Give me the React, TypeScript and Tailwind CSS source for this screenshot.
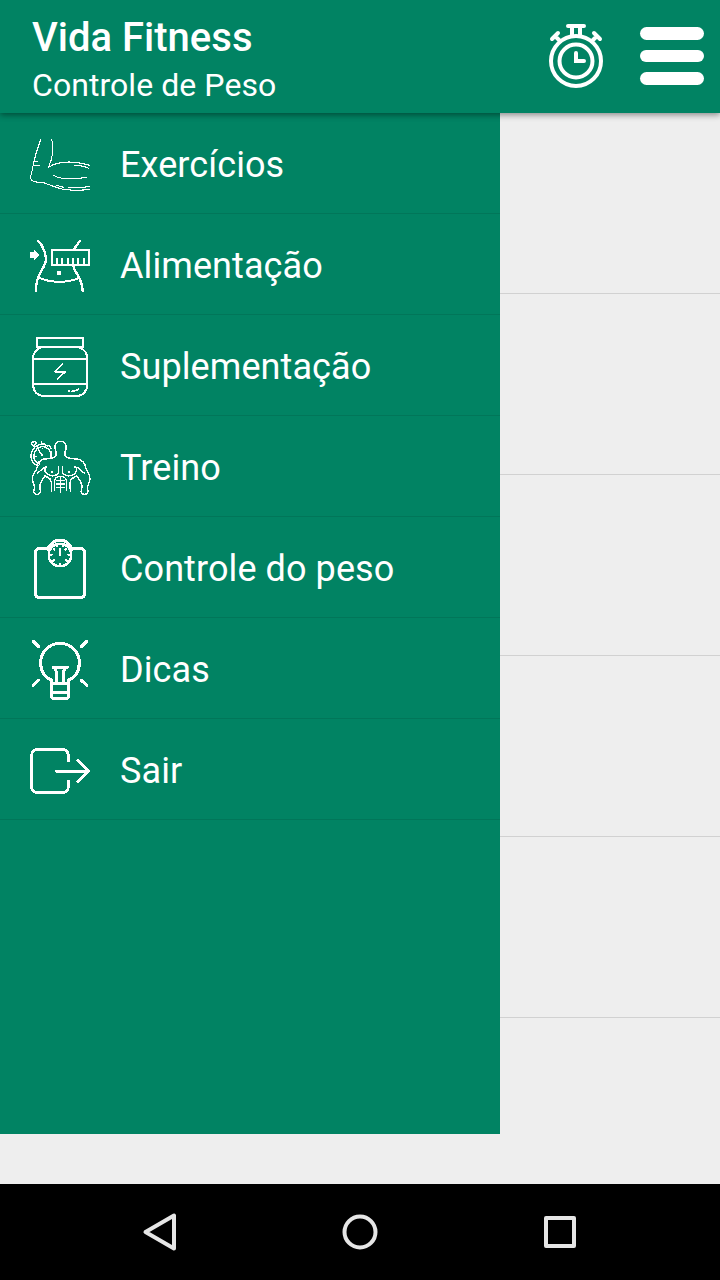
import React from 'react';

type IconProps = { viewBox: string; strokeWidth?: number; children: React.ReactNode };

const MenuIcon: React.FC<IconProps> = ({ viewBox, strokeWidth = 6, children }) => (
  <svg
    className="h-[60px] w-[60px] shrink-0 overflow-visible"
    viewBox={viewBox}
    fill="none"
    stroke="white"
    strokeWidth={strokeWidth}
    strokeLinecap="round"
    strokeLinejoin="round"
    shapeRendering="crispEdges"
  >
    {children}
  </svg>
);

const ArmIcon = () => (
  <MenuIcon viewBox="30 15 180 180" strokeWidth={3.2}>
    <path d="M62 28C52 55 44 82 38 112C36 124 34 133 32 138C31 147 35 153 43 155C51 157 60 156 68 157C84 163 102 170 121 176C148 183 177 181 209 179" />
    <path d="M95 28C97 34 98 44 98 54C98 73 94 93 88 105L85 112C105 99 128 96 147 96C173 96 191 101 209 106" />
    <path d="M163 106C180 106 194 109 207 115M100 136C108 142 116 144 128 145C158 148 181 145 201 142" />
    <path d="M41 94H53M39 106H59M110 166L131 172M145 172H170C184 173 195 172 209 169" />
  </MenuIcon>
);

const WaistIcon = () => (
  <MenuIcon viewBox="30 18 180 180">
    <path d="M55 33C72 50 79 76 77 93C74 118 47 132 47 183M180 33C172 43 166 49 163 58M159 106C164 130 186 140 188 183" strokeWidth="7" />
    <path d="M60 144C91 159 145 159 176 144" />
    <path d="M95 60H208V105H95Z" strokeLinecap="butt" strokeLinejoin="miter" />
    <path d="M111 86V102M127 86V102M143 86V102M159 86V102M175 86V102M191 86V102" />
    <path d="M31 67H42V59L58 75L42 91V84H31Z" fill="white" stroke="none" />
    <circle cx="117" cy="130" r="7" fill="white" stroke="none" />
  </MenuIcon>
);

const JarIcon = () => (
  <MenuIcon viewBox="30 21 180 180" strokeWidth={6}>
    <rect x="50" y="24" width="140" height="27" rx="2" />
    <path d="M63 53C48 58 39 71 39 87V162C39 183 51 198 73 198H168C190 198 202 183 202 162V87C202 71 193 58 178 53M39 87H202M39 162H202" />
    <path d="M127 103L105 125H136L112 147" strokeWidth="5" />
    <path d="M146 183H147M156 184C165 183 170 182 175 178" strokeWidth="5" />
  </MenuIcon>
);

const TrainingIcon = () => (
  <MenuIcon viewBox="30 24 180 180" strokeWidth={4.2}>
    <path d="M108 77V64C104 59 105 50 106 43C108 37 113 34 121 34C130 34 136 38 138 47C140 56 138 61 135 65V77" />
    <path d="M108 77C101 87 88 86 72 87C59 90 52 102 51 113C49 126 36 132 37 147C38 161 47 167 43 177C38 186 42 193 51 193C60 193 63 188 60 177C56 162 63 158 67 150L75 137" />
    <path d="M135 77C142 87 155 86 171 87C189 90 196 102 197 113C200 127 211 132 210 147C208 161 200 167 203 177C207 187 202 193 194 193C185 193 181 188 185 177C189 162 183 158 178 149L171 138" />
    <path d="M79 111C70 115 75 131 85 134C95 140 109 138 116 129V110M165 111C174 115 169 131 159 134C149 140 135 138 127 129V110" />
    <path d="M79 111C67 111 62 124 53 129M165 111C178 111 184 124 193 129M75 137L90 147M169 138L154 147M91 147C97 160 94 170 94 184M153 147C147 160 151 170 151 184" />
    <path d="M104 182V151C106 143 113 139 121 139C130 139 137 143 139 151V182M121 144V188M109 151H118M125 151H134M109 162H118M125 162H134M109 173H118M125 173H134" />
    <path d="M96 126H98M147 126H149" />
    <path d="M83 48C72 39 55 42 45 51C31 65 29 84 40 99C44 104 49 106 54 107M58 102C50 99 44 92 42 84C40 71 46 58 56 53C69 46 84 52 90 63C95 70 94 78 91 84" />
    <path d="M50 49L64 73M65 75H67M37 45L43 51M34 43C34 36 42 34 46 36C51 38 48 45 43 45M65 34V40H73M87 47L94 56M94 66V79M67 55V56M48 79H49" />
  </MenuIcon>
);

const ScaleIcon = () => (
  <MenuIcon viewBox="30 27 180 180" strokeWidth={9}>
    <path d="M83 56H58C51 56 46 61 46 68V190C46 198 51 203 59 203H181C189 203 194 198 194 190V68C194 61 189 56 182 56H157" />
    <path d="M83 58C90 41 103 31 120 31C137 31 150 41 157 58" />
    <circle cx="120" cy="75" r="34" strokeWidth="7" />
    <path d="M120 58V76" strokeWidth="6" />
    <path d="M101 56L104 60M139 56L136 60M91 74H96M149 74H144M98 94L103 89M142 94L137 89M120 103V107M110 45L112 49M130 45L128 49" strokeWidth="6" />
  </MenuIcon>
);

const BulbIcon = () => (
  <MenuIcon viewBox="30 24 180 180" strokeWidth={9}>
    <path d="M95 145C75 136 62 117 62 92C62 60 88 34 120 34C152 34 178 60 178 92C178 117 165 136 145 145" />
    <path d="M95 150V192C95 197 98 200 103 200H137C142 200 145 197 145 192V150M96 153H144M99 182H141" />
    <path d="M105 108L110 122V148M135 108L130 122V148M99 106H142" />
    <path d="M40 28L56 44M200 28L184 44M40 160L55 145M200 160L184 145" />
  </MenuIcon>
);

const ExitIcon = () => (
  <MenuIcon viewBox="30 18 180 180" strokeWidth={9}>
    <path d="M145 81V62C145 51 137 43 126 43H54C43 43 35 51 35 62V155C35 166 43 173 54 173H126C137 173 145 166 145 155V136" strokeLinecap="butt" />
    <path d="M109 108H205M174 76L206 108L174 140" />
  </MenuIcon>
);

const MENU = [
  { label: 'Exercícios', icon: <ArmIcon /> },
  { label: 'Alimentação', icon: <WaistIcon /> },
  { label: 'Suplementação', icon: <JarIcon /> },
  { label: 'Treino', icon: <TrainingIcon /> },
  { label: 'Controle do peso', icon: <ScaleIcon /> },
  { label: 'Dicas', icon: <BulbIcon /> },
  { label: 'Sair', icon: <ExitIcon /> },
];

const Stopwatch = () => (
  <svg className="h-16 w-16" viewBox="0 0 64 64" fill="none" stroke="white" strokeWidth="4" strokeLinecap="round">
    <circle cx="32" cy="37" r="25" />
    <circle cx="32" cy="37" r="16.5" />
    <path d="M24 2H40M28 3V11M36 3V11M8 15L14 9M12 13L16 17M56 15L50 9M52 13L48 17M32 29V37H40" />
  </svg>
);

const App: React.FC = () => (
  <div className="flex h-[1280px] w-[720px] flex-col overflow-hidden bg-[#eeeeee] font-['Roboto',sans-serif]">
    <header className="relative z-10 flex h-[113px] shrink-0 items-center bg-[#018363] pb-px pl-8 pr-4 text-white shadow-[0_2px_6px_rgba(0,0,0,0.42)]">
      <div className="flex-1 pt-1.5">
        <h1 className="text-[40px] font-medium leading-[47px]">Vida Fitness</h1>
        <p className="pt-[5px] text-[32px] leading-[38px] tracking-[0.06px]">Controle de Peso</p>
      </div>
      <button className="mr-8">
        <Stopwatch />
      </button>
      <button className="flex w-16 flex-col gap-2.5">
        <span className="h-[13px] rounded-full bg-white" />
        <span className="h-3 rounded-full bg-white" />
        <span className="h-[13px] rounded-full bg-white" />
      </button>
    </header>

    <main className="flex h-[1071px] shrink-0 items-start">
      <nav className="h-[1021px] w-[500px] bg-[#018363]">
        {MENU.map((item) => (
          <button
            key={item.label}
            className="flex h-[101px] w-full items-center gap-[30px] border-b border-[#017659] pl-[30px] pt-1 text-4xl tracking-[0.09px] text-white"
          >
            {item.icon}
            <span>{item.label}</span>
          </button>
        ))}
      </nav>
      <div className="flex-1">
        {[1, 2, 3, 4, 5].map((row) => (
          <div key={row} className="h-[181px] border-b border-[#d1d1d1]" />
        ))}
      </div>
    </main>

    <footer className="flex h-24 shrink-0 items-center justify-between bg-black px-32">
      <svg className="h-16 w-16" viewBox="0 0 64 64" fill="none" stroke="#e6e6e6" strokeWidth="4" strokeLinejoin="round">
        <path d="M17.5 32L46 15.5V48.5Z" />
      </svg>
      <svg className="h-16 w-16" viewBox="0 0 64 64" fill="none" stroke="#e6e6e6" strokeWidth="4">
        <circle cx="32" cy="32" r="15.5" />
      </svg>
      <svg className="h-16 w-16" viewBox="0 0 64 64" fill="none" stroke="#e6e6e6" strokeWidth="4" strokeLinejoin="round">
        <path d="M18 18H46V46H18Z" />
      </svg>
    </footer>
  </div>
);

export default App;
